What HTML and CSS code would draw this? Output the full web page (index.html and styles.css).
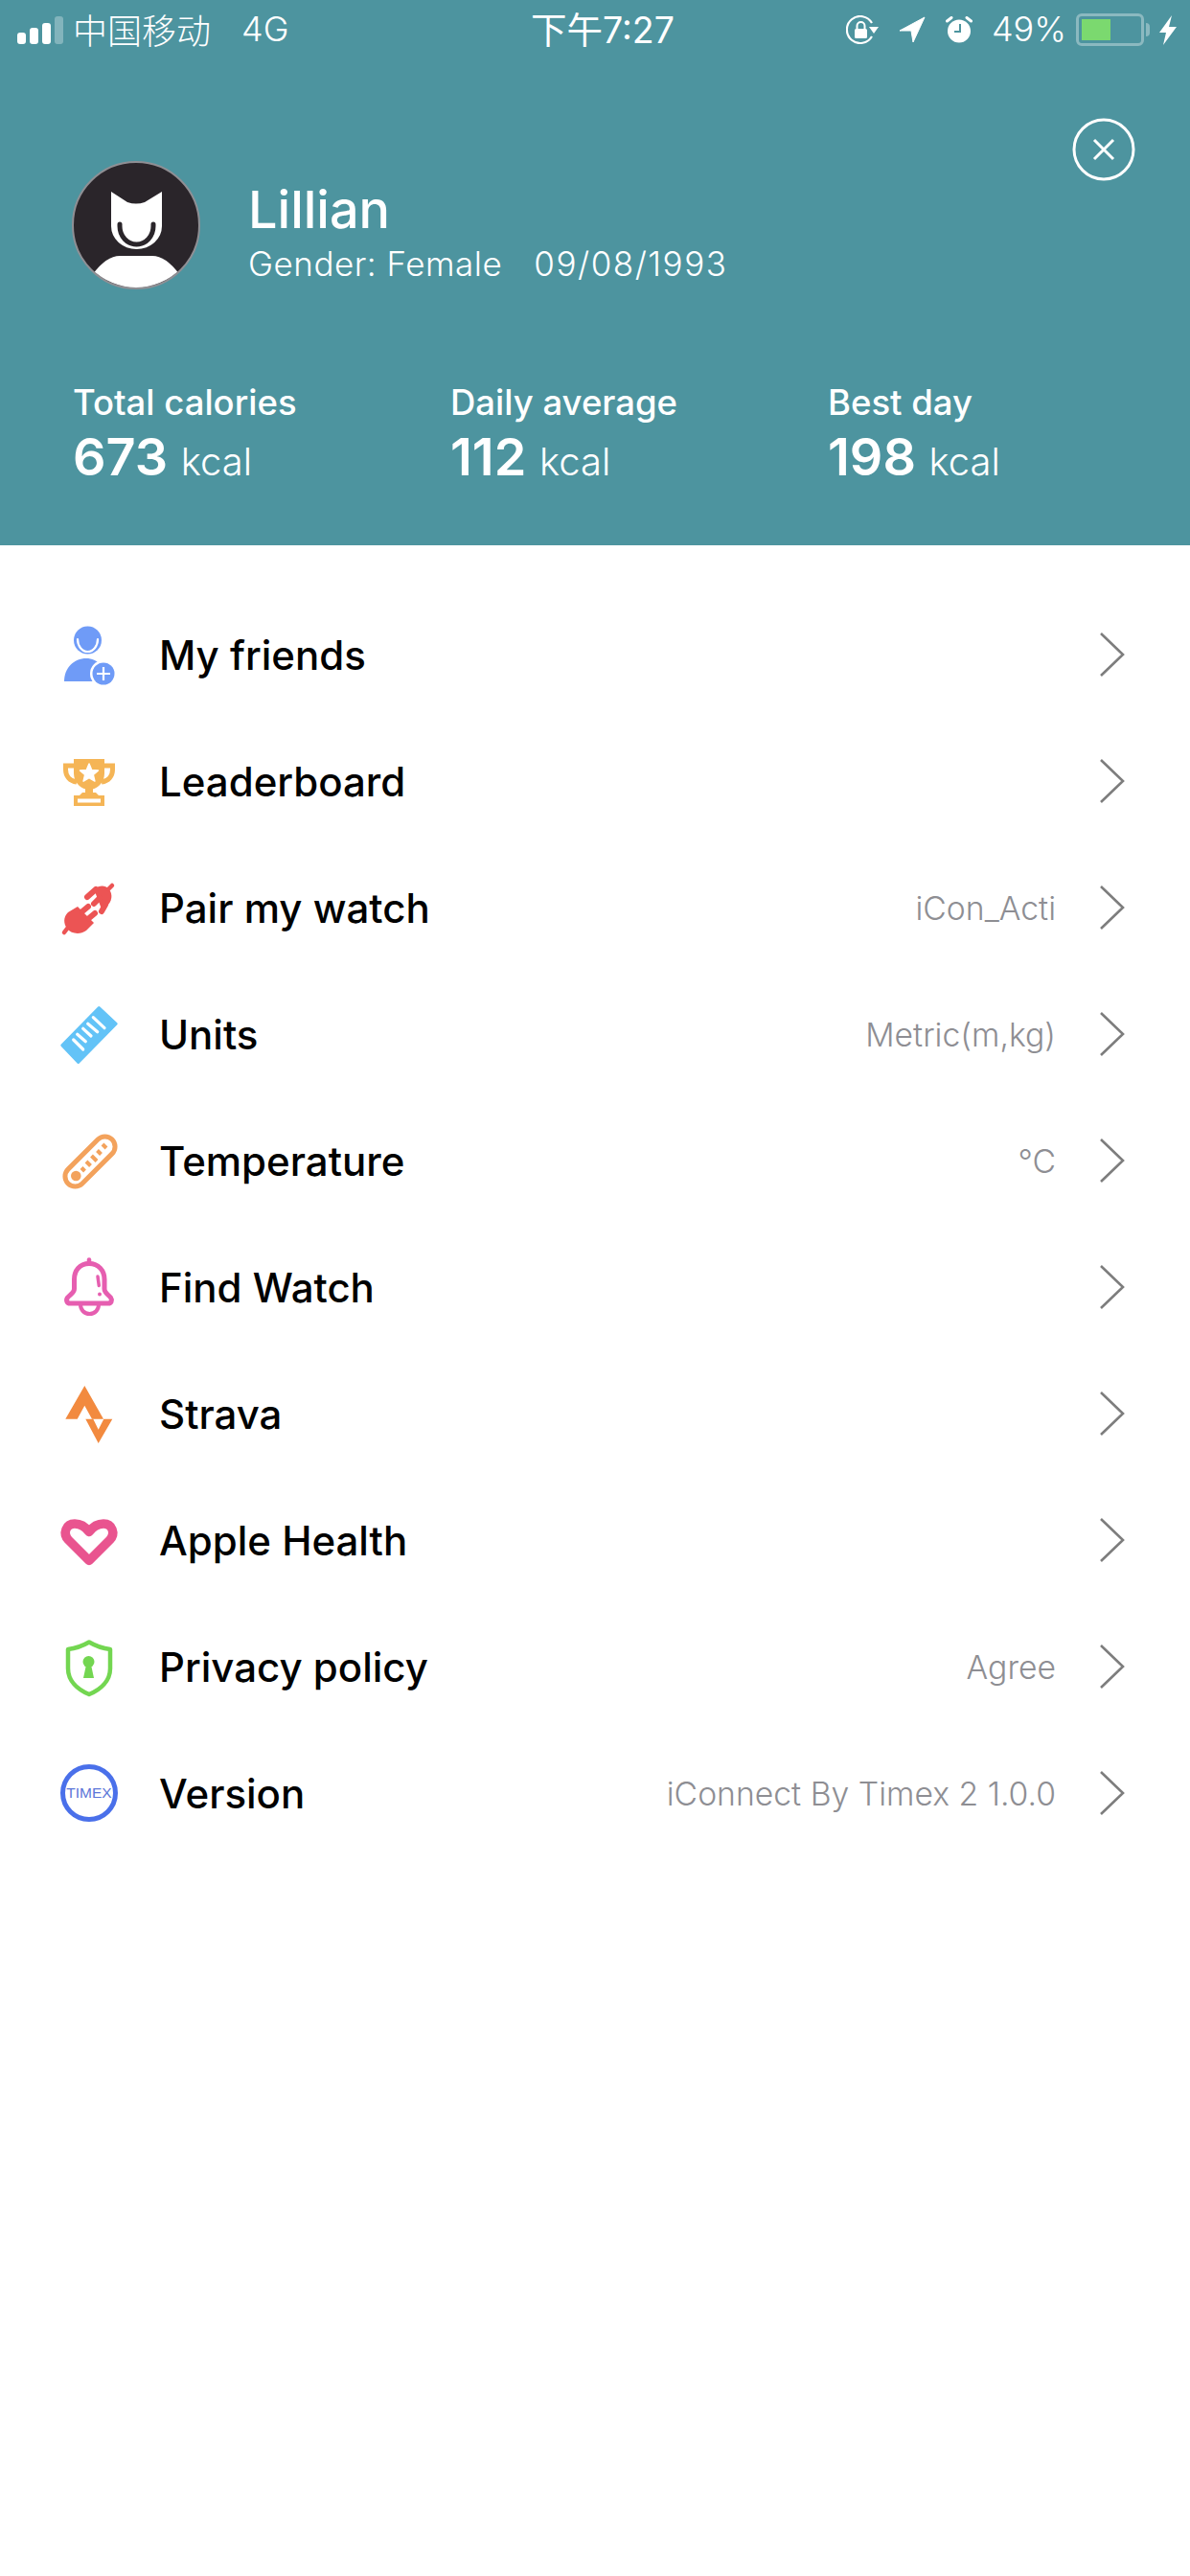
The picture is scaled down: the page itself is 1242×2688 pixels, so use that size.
FILE: index.html
```html
<!DOCTYPE html>
<html lang="en">
<head>
    <meta charset="UTF-8">
    <meta name="viewport" content="width=device-width, initial-scale=1.0">
    <title>Profile menu</title>
    <link rel="stylesheet" href="styles.css">
</head>
<body>

    <div class="header">
        <!-- Status bar -->
        <div class="status-bar">
            <div class="status-left">
                <svg class="signal" width="48" height="29" viewBox="0 0 48 29">
                    <rect x="0" y="17" width="9" height="12" rx="3" fill="#fff"/>
                    <rect x="13" y="12" width="9" height="17" rx="3" fill="#fff"/>
                    <rect x="26" y="7" width="9" height="22" rx="3" fill="#fff"/>
                    <rect x="39" y="0" width="9" height="29" rx="3" fill="#fff" opacity="0.3"/>
                </svg>
                <span class="carrier">中国移动</span>
                <span class="network">4G</span>
            </div>
            <div class="status-time">下午7:27</div>
            <div class="status-right">
                <svg class="st-lock" width="35" height="30" viewBox="0 0 35 30">
                    <path d="M27 8 A14 14 0 1 0 27 22" fill="none" stroke="#fff" stroke-width="2.2"/>
                    <path d="M24 12 H34 L29 19 Z" fill="#fff"/>
                    <rect x="9" y="14" width="13" height="10" rx="1.5" fill="#fff"/>
                    <path d="M11.5 14 V11 A4 4 0 0 1 19.5 11 V14" fill="none" stroke="#fff" stroke-width="2"/>
                </svg>
                <svg class="st-loc" width="28" height="28" viewBox="0 0 28 28">
                    <path d="M1 15 L27 1 L15 27 L13 15 Z" fill="#fff" stroke="#fff" stroke-width="1" stroke-linejoin="round"/>
                </svg>
                <svg class="st-alarm" width="28" height="28" viewBox="0 0 28 28">
                    <circle cx="14" cy="15.5" r="12" fill="#fff"/>
                    <path d="M15 8 V16 H9" fill="none" stroke="#4d949f" stroke-width="2"/>
                    <path d="M1.5 5 L6 1.5 M26.5 5 L22 1.5" stroke="#fff" stroke-width="3" stroke-linecap="round"/>
                </svg>
                <span class="battery-pct">49%</span>
                <div class="battery"><div class="battery-fill"></div></div>
                <div class="battery-tip"></div>
                <svg class="st-bolt" width="18" height="31" viewBox="0 0 18 31">
                    <path d="M13 0 L0 18 H7 L4 31 L18 12 H10 Z" fill="#fff"/>
                </svg>
            </div>
        </div>

        <button class="close-btn">
            <svg width="66" height="66" viewBox="0 0 66 66">
                <circle cx="33" cy="33" r="31" fill="none" stroke="#fff" stroke-width="3"/>
                <path d="M23 23 L43 43 M43 23 L23 43" stroke="#fff" stroke-width="3"/>
            </svg>
        </button>

        <!-- Profile -->
        <div class="profile">
            <svg class="avatar" width="134" height="134" viewBox="0 0 134 134">
                <defs><clipPath id="av"><circle cx="67" cy="67" r="65"/></clipPath></defs>
                <circle cx="67" cy="67" r="66" fill="#2a252a" stroke="#8f8f94" stroke-width="2"/>
                <g clip-path="url(#av)">
                    <path d="M41 32 L58 43 Q67 46 76 43 L94 32 V68 A26.5 24 0 0 1 41 68 Z" fill="#fff"/>
                    <path d="M50 66 V68 A17.5 19 0 0 0 85 68 V66" fill="none" stroke="#2a252a" stroke-width="5" stroke-linecap="round"/>
                    <path d="M22 118 Q36 99 50 99 H84 Q98 99 112 118 V134 H22 Z" fill="#fff"/>
                </g>
            </svg>
            <div class="profile-info">
                <div class="name">Lillian</div>
                <div class="details"><span>Gender: Female</span><span class="birthday">09/08/1993</span></div>
            </div>
        </div>

        <!-- Stats -->
        <div class="stats">
            <div class="stat">
                <div class="stat-label">Total calories</div>
                <div class="stat-value">673 <span class="unit">kcal</span></div>
            </div>
            <div class="stat">
                <div class="stat-label">Daily average</div>
                <div class="stat-value">112 <span class="unit">kcal</span></div>
            </div>
            <div class="stat">
                <div class="stat-label">Best day</div>
                <div class="stat-value">198 <span class="unit">kcal</span></div>
            </div>
        </div>
    </div>

    <div class="menu">
        <div class="menu-item">
            <svg class="menu-icon" width="64" height="64" viewBox="0 0 64 64">
                <circle cx="30.5" cy="17" r="14.5" fill="#6f9bf7"/>
                <path d="M20 16 A10.5 13 0 0 0 41 16" fill="none" stroke="#fff" stroke-width="2.2" stroke-linecap="round"/>
                <path d="M6 60 C6 46 16 36 29 36 C41 36 50 46 50 60 Z" fill="#6f9bf7"/>
                <circle cx="47" cy="52" r="14" fill="#fff"/>
                <circle cx="47" cy="52" r="11.5" fill="#6f9bf7"/>
                <path d="M47 45 V59 M40 52 H54" stroke="#fff" stroke-width="2.2"/>
            </svg>
            <div class="menu-title">My friends</div>
            <svg class="chevron" width="28" height="48" viewBox="0 0 28 48"><path d="M2 2 L25 24 L2 46" fill="none" stroke="#7d7d7d" stroke-width="2.6"/></svg>
        </div>
        <div class="menu-item">
            <svg class="menu-icon" width="64" height="64" viewBox="0 0 64 64">
                <path d="M16 9 H48 V24 C48 34 40 41 32 41 C24 41 16 34 16 24 Z" fill="#f5b556"/>
                <path d="M16 16 H7.500 V20 C7.500 27 12 32 19 33 M48 16 H56.500 V20 C56.500 27 52 32 45 33" fill="none" stroke="#f5b556" stroke-width="5"/>
                <path d="M32 14 L34.600 20.400 L41.500 20.900 L36.300 25.400 L37.900 32.100 L32 28.500 L26.100 32.100 L27.700 25.400 L22.500 20.900 L29.400 20.400 Z" fill="#fff" stroke="#fff" stroke-linejoin="round" stroke-width="1.500"/>
                <rect x="28" y="40" width="8" height="6" fill="#f5b556"/>
                <path d="M22 47 L25 44 H39 L42 47 Z" fill="#f5b556"/>
                <rect x="16" y="47" width="32" height="11" fill="#f5b556"/>
                <rect x="20" y="50.500" width="24" height="4" fill="#fff"/>
            </svg>
            <div class="menu-title">Leaderboard</div>
            <svg class="chevron" width="28" height="48" viewBox="0 0 28 48"><path d="M2 2 L25 24 L2 46" fill="none" stroke="#7d7d7d" stroke-width="2.6"/></svg>
        </div>
        <div class="menu-item">
            <svg class="menu-icon" width="64" height="64" viewBox="0 0 64 64" fill="none" stroke-linecap="round">
                <path d="M37 13 C43 8 49 9 52 12 C56 16 57 23 52 29 L46 36 Z" fill="#ec5454" stroke="none"/>
                <path d="M52 13 L56 9" stroke="#ec5454" stroke-width="4.500"/>
                <path d="M39 13 L30 21 M43 22 L37 28 M49 29 L45 36" stroke="#ec5454" stroke-width="6"/>
                <path d="M20 31 L37 48 L29 56 C22 61 13 59 9.500 54.500 C5 49 5 42 10 37 Z" fill="#ec5454" stroke="none"/>
                <path d="M9 54 L6 58" stroke="#ec5454" stroke-width="4.500"/>
                <path d="M25 36 L31 31 M32 43 L38 38" stroke="#ec5454" stroke-width="6"/>
            </svg>
            <div class="menu-title">Pair my watch</div>
            <div class="menu-value">iCon_Acti</div>
            <svg class="chevron" width="28" height="48" viewBox="0 0 28 48"><path d="M2 2 L25 24 L2 46" fill="none" stroke="#7d7d7d" stroke-width="2.6"/></svg>
        </div>
        <div class="menu-item">
            <svg class="menu-icon" width="64" height="64" viewBox="0 0 64 64">
                <path d="M42.300 4.500 L60.200 21.300 L20.700 61.500 L3.800 43.700 Z" fill="#63c3f7" stroke="#63c3f7" stroke-width="3" stroke-linejoin="round"/>
                <path d="M15.700 38 L25.700 48 M19.700 32.300 L28.300 39.700 M25.700 26.300 L34 34 M30.700 21.300 L40.700 29.700 M36.300 14.700 L48 25.700" stroke="#fff" stroke-width="3.200" stroke-linecap="round"/>
            </svg>
            <div class="menu-title">Units</div>
            <div class="menu-value">Metric(m,kg)</div>
            <svg class="chevron" width="28" height="48" viewBox="0 0 28 48"><path d="M2 2 L25 24 L2 46" fill="none" stroke="#7d7d7d" stroke-width="2.6"/></svg>
        </div>
        <div class="menu-item">
            <svg class="menu-icon" width="64" height="64" viewBox="0 0 64 64">
                <rect x="0.500" y="22.500" width="65" height="21" rx="10.500" transform="rotate(-45 33 33)" fill="none" stroke="#f3a25c" stroke-width="5"/>
                <circle cx="18.300" cy="48" r="5.300" fill="#f3a25c"/>
                <path d="M24 39.500 L27.500 43 M29 33 L33.500 37.500 M34.500 27 L40 32.500 M40.500 21.500 L44.500 25.500 M46 15 L50 19" stroke="#f3a25c" stroke-width="4"/>
            </svg>
            <div class="menu-title">Temperature</div>
            <div class="menu-value">°C</div>
            <svg class="chevron" width="28" height="48" viewBox="0 0 28 48"><path d="M2 2 L25 24 L2 46" fill="none" stroke="#7d7d7d" stroke-width="2.6"/></svg>
        </div>
        <div class="menu-item">
            <svg class="menu-icon" width="64" height="64" viewBox="0 0 64 64" fill="none" stroke="#e65eb0">
                <path d="M32 7.500 C22 7.500 16.500 15 16.500 24 V34 C16.500 38 12 40 9.500 43 C7.500 46 9 49 12 49 H52 C55 49 56.500 46 54.500 43 C52 40 48 38 48 34 V24 C48 15 42 7.500 32 7.500 Z" stroke-width="5"/>
                <path d="M32 3.500 V7" stroke-width="4.500" stroke-linecap="round"/>
                <path d="M41 21 L42.300 30.500" stroke-width="3.500" stroke-linecap="round"/>
                <circle cx="43" cy="39.500" r="2" fill="#e65eb0" stroke="none"/>
                <path d="M23 50 C23 56 27 60 32.500 60 C38 60 42 56 42 50" stroke-width="4"/>
            </svg>
            <div class="menu-title">Find Watch</div>
            <svg class="chevron" width="28" height="48" viewBox="0 0 28 48"><path d="M2 2 L25 24 L2 46" fill="none" stroke="#7d7d7d" stroke-width="2.6"/></svg>
        </div>
        <div class="menu-item">
            <svg class="menu-icon" width="64" height="64" viewBox="0 0 64 64">
                <path d="M27.300 3 L47 37.700 H35 L27.300 23.700 L19.700 37.700 H7.300 Z" fill="#f28a3f"/>
                <path d="M28.300 37.700 H36.300 L41.700 48.700 L47.300 37.700 H56.300 L41.700 63 Z" fill="#f28a3f"/>
            </svg>
            <div class="menu-title">Strava</div>
            <svg class="chevron" width="28" height="48" viewBox="0 0 28 48"><path d="M2 2 L25 24 L2 46" fill="none" stroke="#7d7d7d" stroke-width="2.6"/></svg>
        </div>
        <div class="menu-item">
            <svg class="menu-icon" width="64" height="64" viewBox="0 0 64 64">
                <path d="M32 53.500 L10.500 32 C4 25 8 15 17 15 C23 15 28 18 32 23.500 C36 18 41 15 47 15 C56 15 60 25 53.500 32 Z" fill="none" stroke="#e9548f" stroke-width="9.500" stroke-linejoin="round"/>
            </svg>
            <div class="menu-title">Apple Health</div>
            <svg class="chevron" width="28" height="48" viewBox="0 0 28 48"><path d="M2 2 L25 24 L2 46" fill="none" stroke="#7d7d7d" stroke-width="2.6"/></svg>
        </div>
        <div class="menu-item">
            <svg class="menu-icon" width="64" height="64" viewBox="0 0 64 64">
                <path d="M32 6.500 C38 10 45 13 54 14 V34 C54 47 44 56 32 61 C20 56 10 47 10 34 V14 C19 13 26 10 32 6.500 Z" fill="none" stroke="#73d651" stroke-width="4.500" stroke-linejoin="round"/>
                <circle cx="31.500" cy="27" r="6" fill="#73d651"/>
                <path d="M29 30 L26 44 H37 L34 30 Z" fill="#73d651"/>
            </svg>
            <div class="menu-title">Privacy policy</div>
            <div class="menu-value">Agree</div>
            <svg class="chevron" width="28" height="48" viewBox="0 0 28 48"><path d="M2 2 L25 24 L2 46" fill="none" stroke="#7d7d7d" stroke-width="2.6"/></svg>
        </div>
        <div class="menu-item">
            <div class="timex-icon">TIMEX</div>
            <div class="menu-title">Version</div>
            <div class="menu-value">iConnect By Timex 2 1.0.0</div>
            <svg class="chevron" width="28" height="48" viewBox="0 0 28 48"><path d="M2 2 L25 24 L2 46" fill="none" stroke="#7d7d7d" stroke-width="2.6"/></svg>
        </div>
    </div>

</body>
</html>
```

FILE: styles.css
```css
* {
    box-sizing: border-box;
}
body {
    margin: 0;
    background: #fff;
    font-family: Inter, "Noto Sans CJK SC", sans-serif;
    color: #000;
}
.header {
    position: relative;
    height: 569px;
    background: #4d949f;
    color: #fff;
}
.status-bar {
    display: grid;
    grid-template-columns: 1fr auto 1fr;
    align-items: center;
    height: 62px;
    padding: 0 14px 0 18px;
}
.status-left {
    display: flex;
    align-items: center;
}
.signal {
    margin-right: 10px;
}
.carrier {
    margin-bottom: 3px;
    font-size: 36px;
    font-family: "Noto Sans CJK SC", sans-serif;
    font-weight: 300;
}
.network {
    margin-bottom: 2px;
    font-size: 36px;
    font-weight: 300;
    margin-left: 32px;
}
.status-time {
    font-size: 37.5px;
    margin-left: 12px;
    margin-bottom: 6px;
}
.status-right {
    display: flex;
    align-items: center;
    justify-content: flex-end;
}
.st-loc {
    margin-left: 20px;
}
.st-alarm {
    margin-left: 21px;
}
.battery-pct {
    font-size: 36px;
    font-weight: 300;
    margin-left: 20px;
    margin-bottom: 2px;
}
.battery {
    width: 71px;
    height: 34px;
    margin-left: 10px;
    padding: 3px;
    border: 3px solid rgba(255, 255, 255, 0.35);
    border-radius: 6px;
}
.battery-fill {
    width: 30px;
    height: 100%;
    background: #7bd96f;
}
.battery-tip {
    width: 4px;
    height: 14px;
    margin-left: 2px;
    background: rgba(255, 255, 255, 0.35);
    border-radius: 0 4px 4px 0;
}
.st-bolt {
    margin-left: 10px;
}
.close-btn {
    position: absolute;
    top: 123px;
    right: 57px;
    padding: 0;
    border: none;
    background: none;
    display: flex;
}
.profile {
    display: flex;
    align-items: center;
    padding: 106px 0 0 75px;
}
.profile-info {
    margin-left: 50px;
    padding-top: 15px;
}
.name {
    font-size: 54px;
    font-weight: 500;
    line-height: 60px;
}
.details {
    display: flex;
    gap: 33px;
    margin-top: 4px;
    font-size: 35px;
    font-weight: 300;
    line-height: 44px;
    letter-spacing: 0.5px;
}
.birthday {
    letter-spacing: 1.5px;
}
.stats {
    display: flex;
    padding: 93px 0 0 76px;
}
.stat {
    flex: none;
    width: 394px;
}
.stat-label {
    font-size: 36.5px;
    font-weight: 500;
    line-height: 50px;
}
.stat-value {
    font-size: 54px;
    font-weight: 600;
    line-height: 64px;
    white-space: nowrap;
}
.unit {
    font-size: 40px;
    font-weight: 300;
}
.menu {
    padding-top: 48px;
}
.menu-item {
    display: flex;
    align-items: center;
    height: 132px;
    padding-left: 61px;
    padding-right: 67px;
}
.menu-icon {
    flex: none;
    width: 64px;
    height: 64px;
}
.timex-icon {
    flex: none;
    display: flex;
    align-items: center;
    justify-content: center;
    width: 60px;
    height: 60px;
    margin: 0 2px;
    border: 5px solid #4a70ea;
    border-radius: 50%;
    color: #5b76d8;
    font-family: "Liberation Sans", sans-serif;
    font-size: 15.5px;
}
.menu-title {
    flex: 1;
    margin-left: 41px;
    font-size: 42px;
    font-weight: 500;
}
.menu-value {
    font-size: 33.7px;
    font-weight: 300;
    color: #8e8e93;
    margin-right: 45px;
}
.chevron {
    flex: none;
}
```
